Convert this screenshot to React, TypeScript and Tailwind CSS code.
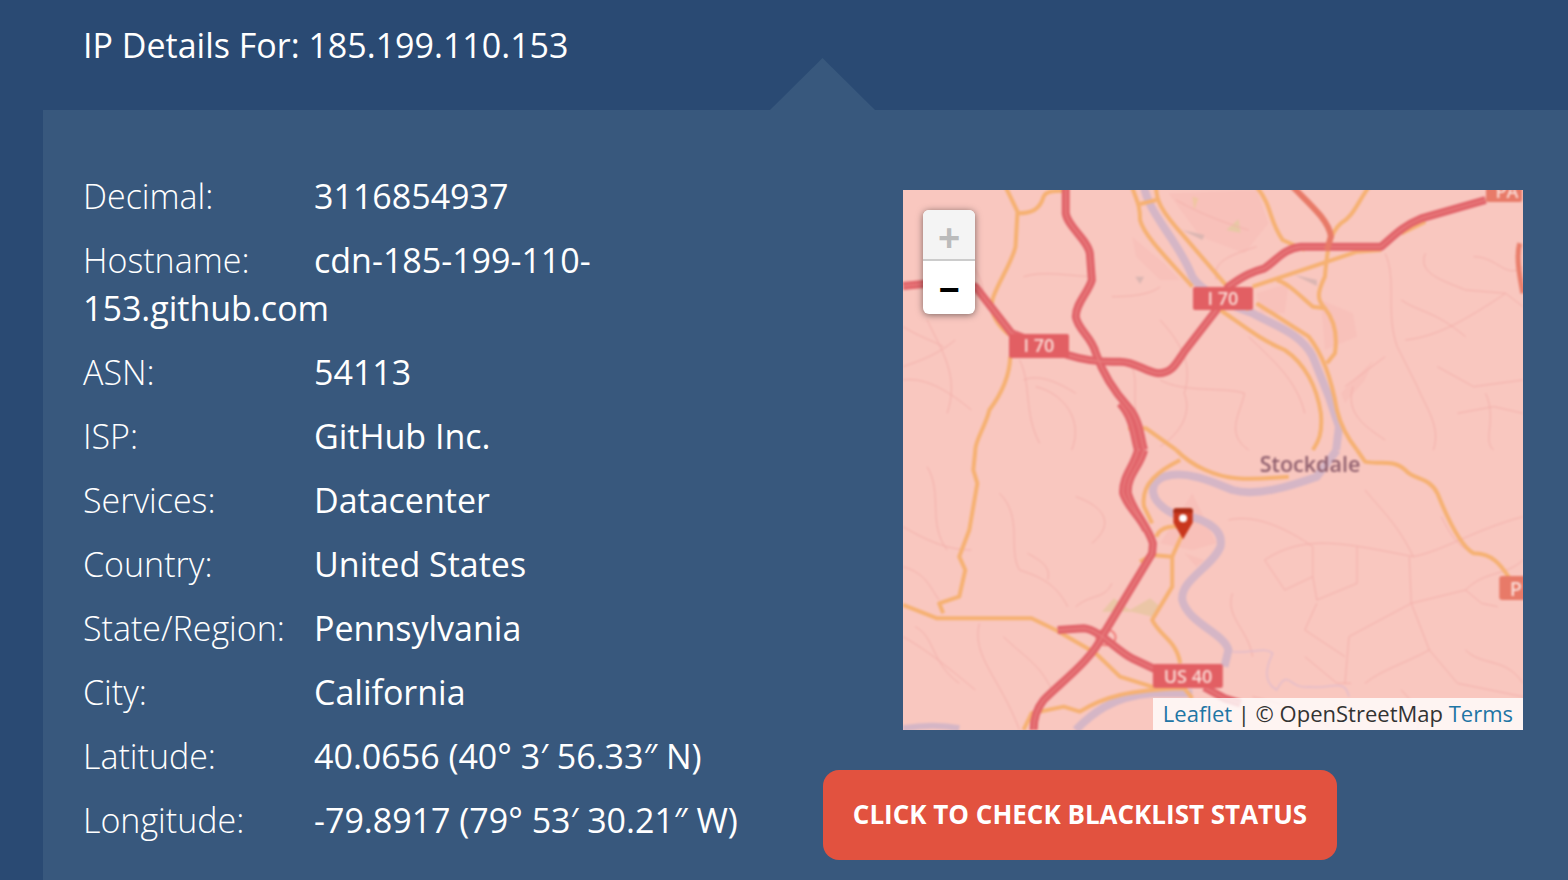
const rows: [string, string][] = [
  ["Decimal:", "3116854937"],
  ["Hostname:", "cdn-185-199-110-153.github.com"],
  ["ASN:", "54113"],
  ["ISP:", "GitHub Inc."],
  ["Services:", "Datacenter"],
  ["Country:", "United States"],
  ["State/Region:", "Pennsylvania"],
  ["City:", "California"],
  ["Latitude:", "40.0656 (40° 3′ 56.33″ N)"],
  ["Longitude:", "-79.8917 (79° 53′ 30.21″ W)"],
];

const redTop = [
  "M0,318 L50,312 L180,320 L270,460 L410,525 C450,540 490,548 540,545 C580,545 600,575 635,580 C670,580 680,550 700,515 L780,390 L810,320 C850,285 870,275 900,265 C930,240 950,205 990,200 L1190,200 C1220,170 1240,140 1290,115 L1450,60",
  "M405,20 L405,100 C410,140 460,180 465,220 L470,300 C460,340 430,370 430,410 C435,450 470,470 480,520 C500,590 530,640 560,680 C590,720 590,770 600,810",
  "M540,670 C575,715 575,775 585,810",
];
const redBottom = [
  "M600,0 C590,50 555,80 560,130 C570,180 610,230 622,280 L620,310 L500,550 C470,630 400,690 350,750 C330,780 325,810 325,840",
  "M585,0 C575,50 545,80 548,130 C558,170 590,200 605,240",
  "M385,540 L450,535 C490,540 530,600 570,625 L640,665",
  "M750,712 L800,745 L840,760",
];
const orangeTop = [
  "M255,20 L285,95 L280,200 C270,250 240,300 225,350 C210,400 240,440 265,465",
  "M267,530 C265,600 240,650 215,690 C205,740 180,780 180,810",
  "M285,100 C320,100 340,90 350,50 C355,35 370,32 405,32",
  "M570,20 C580,60 590,70 590,120 C600,170 670,250 720,320",
  "M590,72 L630,60 M630,20 C630,60 640,90 700,170 L800,310 L860,390",
  "M880,20 C920,80 910,120 945,180 L1000,210",
  "M870,320 L1130,215 L1190,210 M1240,160 L1300,125",
  "M1160,20 C1130,70 1120,110 1090,130 C1060,160 1055,220 1050,290 C1030,340 1030,360 1050,385 C1080,430 1080,480 1075,520 L1055,550",
  "M930,300 C960,310 990,350 1020,380 L1050,385",
  "M790,390 C850,440 890,480 950,510 C1000,550 1030,620 1040,700 C1045,770 1030,790 1020,810",
  "M880,370 L1010,470 C1050,530 1070,620 1080,690 C1090,740 1110,780 1130,810",
  "M560,745 L605,745 L680,810",
];
const orangeBottom = [
  "M180,0 L175,60 L185,100 L165,240 L140,320 L155,360 L140,440 L90,460 L100,490",
  "M0,465 L85,505 L320,505 L380,540 L480,610 L540,680 L625,712",
  "M680,0 C720,50 780,80 830,85 C880,90 900,85 960,80",
  "M1130,0 L1150,35 C1180,45 1220,25 1250,60 C1270,90 1310,80 1330,130 C1360,220 1390,290 1420,310 C1470,310 1490,350 1510,385",
  "M690,30 C640,60 590,100 600,170 L620,220",
  "M630,260 C640,230 680,220 700,240 L670,320 L620,315 L590,335",
  "M670,320 L670,410 L620,510 C640,560 680,570 690,640",
  "M300,840 L320,790 L400,770 L440,785 C500,740 560,720 700,715 L720,745",
];
const thinTop = [
  "M0,600 C60,590 120,640 170,690 M60,420 C100,520 140,590 110,700 M330,620 C400,640 450,720 420,810",
  "M300,290 C350,270 420,290 480,290 M520,350 C580,350 620,340 640,320",
  "M640,600 C700,640 800,620 850,640 C840,700 800,760 860,810 M700,640 C720,700 690,760 640,800",
  "M1200,220 C1230,300 1200,400 1230,500 M1300,220 C1280,280 1340,300 1400,330 L1500,340 M1500,340 L1543,380",
  "M1250,480 C1330,470 1400,420 1500,340 M1100,620 L1200,530 M1230,500 L1280,620 C1300,680 1340,740 1320,810",
  "M1420,230 C1480,230 1500,300 1543,260 M1450,640 C1480,720 1440,780 1470,810",
  "M680,60 C720,90 800,130 860,150 M880,200 C800,230 770,250 780,300",
  "M1120,620 C1100,700 1150,740 1200,780",
  "M60,140 C120,180 180,230 200,330 M0,440 C40,470 70,480 100,500",
  "M0,560 C50,540 90,520 130,480 M300,600 C340,580 390,610 430,640 M290,540 C320,610 300,700 340,790",
  "M570,560 C590,620 560,700 600,740 M640,420 C700,500 720,560 700,640 M860,470 C920,540 980,600 1000,700",
  "M1330,560 L1420,620 L1543,600 M1240,360 C1290,400 1320,390 1400,470 M1380,700 L1470,680 L1543,700",
];
const thinBottom = [
  "M0,230 C70,280 120,300 170,300 M240,130 C300,200 260,300 290,360 C340,380 380,400 410,470",
  "M430,140 C500,170 530,220 470,280 M0,560 C60,600 120,660 180,720 M190,520 C170,620 240,680 290,840",
  "M900,330 C1000,250 1100,280 1270,320 C1350,300 1420,240 1543,200",
  "M1020,290 L1020,380 L950,420 L900,330 M1130,290 L1130,400 L1030,450 L1020,380",
  "M1260,320 L1265,460 L1110,560 L1100,700 M1265,460 L1400,420 L1440,460 L1480,470 M1265,460 L1310,600 L1380,700 L1543,740",
  "M820,430 C800,500 860,540 870,620 M1030,460 L1000,540 L1100,620 M810,210 C880,190 960,240 1020,290",
  "M1400,600 C1440,650 1500,620 1543,700 M1000,620 L1080,700 L1115,700",
  "M60,50 C100,130 60,220 110,300 M0,350 C60,370 70,420 90,450 M30,530 C80,560 70,640 140,700 M250,560 C300,620 340,640 370,720",
  "M430,470 C470,430 500,450 520,400 M310,310 C340,330 370,350 360,390",
  "M1150,700 C1190,660 1250,640 1310,600 M1400,420 C1450,360 1500,380 1543,330 M1150,120 C1190,180 1230,220 1270,320 M1340,200 C1360,250 1380,290 1420,310",
  "M870,740 C940,760 1000,780 1060,830 M1240,720 C1280,770 1290,800 1280,840",
];

function MapPicture() {
  return (
    <svg viewBox="0 0 620 540" className="block h-full w-full">
      <rect width="620" height="540" fill="#f9c7bf" />
      <g className="blur-[0.8px] [&_path]:[vector-effect:non-scaling-stroke] [&_ellipse]:[vector-effect:non-scaling-stroke]">
        <rect x="-20" y="-20" width="660" height="580" fill="#f9c7bf" />
        <g transform="translate(0,-10) scale(0.4018,0.3333)">
          <g fill="#f7b9b4" opacity="0.4">
            <path d="M570,170 L650,250 L690,300 L640,300 L580,230 Z" />
            <path d="M660,40 L880,30 L910,130 L850,220 L740,170 Z" />
            <path d="M880,340 L960,310 L950,400 L890,400 Z" />
            <path d="M1040,360 L1120,400 L1130,470 L1050,510 Z" />
            <path d="M1090,640 L1170,540 L1150,600 L1100,670 Z" />
          </g>
          <path d="M805,150 L835,118 L840,158 Z" fill="#e7c9a5" />
          <path d="M720,50 L735,55 L725,90 Z" fill="#f0c6a2" />
          <path d="M695,150 L750,165 L745,180 Z M578,290 L600,290 L590,312 Z M975,285 L1030,300 L1030,318 Z" fill="#dbb6b2" />
          <g fill="none" stroke="#f4b0ab" strokeWidth="1">
            {thinTop.map((d) => <path key={d} d={d} />)}
          </g>
          <path d="M600,20 C610,100 690,190 720,290 C740,330 800,370 870,400 C930,440 990,460 1020,530 L1060,650 L1085,740 L1078,810" fill="none" stroke="#d5b6c6" strokeWidth="8" />
          <g fill="none" stroke="#f6b172" strokeWidth="4" strokeLinejoin="round">
            {orangeTop.map((d) => <path key={d} d={d} />)}
          </g>
          <g fill="none" stroke="#e1646a" strokeWidth="8" strokeLinejoin="round">
            {redTop.map((d) => <path key={d} d={d} />)}
          </g>
          <g fill="none" stroke="#e97c7d" strokeWidth="1.5" strokeLinejoin="round">
            {redTop.map((d) => <path key={d} d={d} />)}
          </g>
          <path d="M970,20 C1010,70 1060,120 1065,170 L1055,210" fill="none" stroke="#e87a68" strokeWidth="6" />
          <path d="M1535,190 C1525,230 1535,290 1543,340" fill="none" stroke="#ea7f6c" strokeWidth="5" />
        </g>
        <g transform="translate(0,260) scale(0.4018,0.3333)">
          <path d="M720,130 L760,230 L780,280 L720,300 L640,280 Z M700,310 L750,330 L730,350 Z" fill="#f7b9b4" opacity="0.5" />
          <path d="M495,485 L525,445 L565,480 L615,445 L640,470 L620,500 L570,485 Z" fill="#ebc6a6" />
          <g fill="none" stroke="#f4b0ab" strokeWidth="1">
            {thinBottom.map((d) => <path key={d} d={d} />)}
          </g>
          <path d="M1080,0 L1030,80 C960,110 880,140 820,120 C760,90 700,60 650,80 C610,100 610,150 670,190 C740,200 800,230 790,290 C770,350 690,390 695,450 C710,520 800,550 810,600 L800,650" fill="none" stroke="#d5b6c6" strokeWidth="8" />
          <path d="M820,605 C870,610 900,590 920,610 C900,660 900,700 930,720 C960,650 960,720 1010,710 C1060,720 1100,680 1110,740" fill="none" stroke="#e2bccb" strokeWidth="1.5" />
          <path d="M430,840 C470,790 520,740 620,730 L720,730" fill="none" stroke="#d5b6c6" strokeWidth="8" />
          <path d="M0,835 C50,825 100,825 140,835" fill="none" stroke="#d5b6c6" strokeWidth="6" />
          <g fill="none" stroke="#f6b172" strokeWidth="4" strokeLinejoin="round">
            {orangeBottom.map((d) => <path key={d} d={d} />)}
          </g>
          <ellipse cx="505" cy="562" rx="24" ry="24" fill="none" stroke="#f07f7c" strokeWidth="2" />
          <g fill="none" stroke="#e1646a" strokeWidth="8" strokeLinejoin="round">
            {redBottom.map((d) => <path key={d} d={d} />)}
          </g>
          <g fill="none" stroke="#e97c7d" strokeWidth="1.5" strokeLinejoin="round">
            {redBottom.map((d) => <path key={d} d={d} />)}
          </g>
          <rect x="622" y="642" width="174" height="72" rx="6" fill="#e25f63" />
          <rect x="1484" y="378" width="70" height="72" rx="8" fill="#e87a68" />
        </g>
        <g fill="#e25f63">
          <rect x="106" y="144" width="60" height="24" rx="2" />
          <rect x="290" y="97" width="60" height="23" rx="2" />
        </g>
        <rect x="583" y="-4" width="36" height="16" rx="2" fill="#e87a68" />
        <g fontFamily="'Open Sans', sans-serif" fontWeight="600" fill="#fbdcd6" fontSize="18" textAnchor="middle">
          <text x="136" y="162">I 70</text>
          <text x="320" y="115">I 70</text>
          <text x="285" y="493">US 40</text>
          <text x="604" y="8">PA</text>
          <text x="613" y="406" fontSize="20">P</text>
        </g>
        <text x="407" y="282" fontFamily="'Open Sans', sans-serif" fontWeight="600" fontSize="21.5" fill="#8f5f6e" textAnchor="middle">Stockdale</text>
        <g transform="translate(0,260) scale(0.4018,0.3333)">
          <path d="M673,180 Q673,175 680,175 L714,175 Q721,175 721,180 L721,218 L697,268 L673,218 Z" fill="#c9371d" />
          <path d="M673,180 Q673,175 680,175 L714,175 Q721,175 721,180 L721,188 L673,188 Z" fill="#a92b15" />
          <ellipse cx="697" cy="205" rx="10" ry="12" fill="#fff" />
        </g>
      </g>
    </svg>
  );
}

export default function App() {
  return (
    <div className="h-[880px] w-[1568px] overflow-hidden bg-[#2a4a73] font-['Open_Sans',sans-serif] text-white">
      <header className="flex h-[110px] items-start pl-[83px] pt-[21px]">
        <h1 className="text-[34px] font-normal leading-[48px]">IP Details For: 185.199.110.153</h1>
      </header>
      <main className="relative ml-[43px] flex h-[770px] items-start bg-[#38587d] pl-[40px] pt-[62px]">
        <div
          className="absolute left-[727px] top-[-52px] h-[52px] w-[105px] bg-[#38587d]"
          style={{ clipPath: "polygon(50% 0, 100% 100%, 0 100%)" }}
        />
        <div className="flex w-[740px] shrink-0 flex-col gap-4 text-[34px] leading-[48px]">
          {rows.map(([label, value]) => (
            <p key={label}>
              <span className="inline-block w-[231px] font-light">{label}</span>
              <span>{value}</span>
            </p>
          ))}
        </div>
        <div className="flex flex-col items-start pt-[18px]">
          <div className="relative ml-[80px] h-[540px] w-[620px] overflow-hidden">
            <MapPicture />
            <div className="absolute left-[20px] top-[20px] w-[52px] overflow-hidden rounded-md bg-white shadow-[0_1px_7px_rgba(0,0,0,0.5)]">
              <div className="flex h-[51px] items-center justify-center border-b-2 border-[#ccc] bg-[#f4f4f4] pt-[6px] font-['Liberation_Sans',sans-serif] text-[38px] font-bold leading-none text-[#bbb]">
                +
              </div>
              <div className="flex h-[53px] items-center justify-center pt-[4px] font-['Liberation_Sans',sans-serif] text-[36px] font-bold leading-none text-black">
                −
              </div>
            </div>
            <div className="absolute bottom-0 right-0 flex h-[32px] w-[370px] items-center justify-end whitespace-nowrap bg-white/80 pb-[2px] pr-[10px] text-[22px] leading-[30px] text-[#333]">
              <span className="text-[#1f76a5]">Leaflet</span>
              <span>&nbsp;|&nbsp;© OpenStreetMap&nbsp;</span>
              <span className="text-[#1f76a5]">Terms</span>
            </div>
          </div>
          <button className="mt-10 flex h-[90px] w-[514px] items-center justify-center rounded-2xl bg-[#e2523f] pb-[2px] text-[26px] font-bold uppercase text-white">
            Click to check blacklist status
          </button>
        </div>
      </main>
    </div>
  );
}
